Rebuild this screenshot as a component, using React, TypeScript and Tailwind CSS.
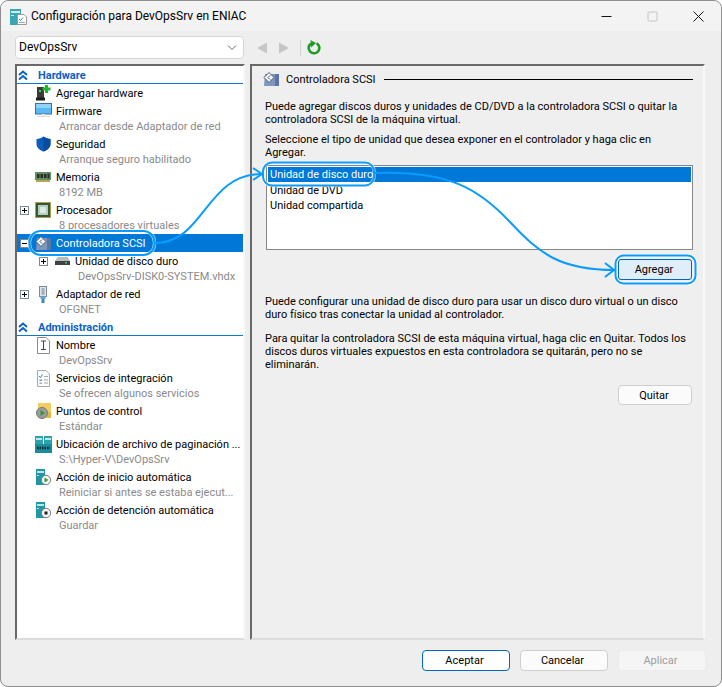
import type { ReactNode } from 'react'

const Chevrons = () => (
  <svg width="10" height="10" viewBox="0 0 10 10" fill="none" stroke="#0a62c9" strokeWidth="2">
    <path d="M1 5 L5 1.5 L9 5" />
    <path d="M1 9.5 L5 6 L9 9.5" />
  </svg>
)

const Toggle = ({ open }: { open?: boolean }) => (
  <svg width="9" height="9" viewBox="0 0 9 9" className="bg-white">
    <rect x="0.5" y="0.5" width="8" height="8" fill="#fff" stroke="#7c8894" />
    <path d="M2 4.5 H7" stroke="#000" />
    {!open && <path d="M4.5 2 V7" stroke="#000" />}
  </svg>
)

const AddHardwareIcon = () => (
  <svg width="16" height="16" viewBox="0 0 16 16">
    <rect x="2" y="2" width="7" height="11" fill="#3a3a3a" />
    <rect x="1" y="12.5" width="9" height="3" fill="#1c1c1c" />
    <rect x="4" y="5" width="2" height="2" fill="#3ddc4a" />
    <path d="M10 0 H13 V2.5 H15.5 V5.5 H13 V8 H10 V5.5 H7.5 V2.5 H10 Z" fill="#22b52e" />
  </svg>
)

const MonitorIcon = () => (
  <svg width="17" height="16" viewBox="0 0 17 16">
    <rect x="0.5" y="0.5" width="16" height="10.5" fill="#5cb8f2" stroke="#3b6ea5" />
    <rect x="1" y="1" width="15" height="4" fill="#8ed2f8" />
    <rect x="2" y="13" width="13" height="1" fill="#dcdcdc" />
    <rect x="7" y="11" width="3" height="2" fill="#e4e4e4" />
  </svg>
)

const ShieldIcon = () => (
  <svg width="15" height="16" viewBox="0 0 15 16">
    <path d="M7.5 0.5 C9.5 2 12 2.8 14.5 3 V8 C14.5 11.5 11.5 14 7.5 15.5 C3.5 14 0.5 11.5 0.5 8 V3 C3 2.8 5.5 2 7.5 0.5 Z" fill="#0a5db8" />
    <path d="M7.5 0.5 C9.5 2 12 2.8 14.5 3 V8 C14.5 11.5 11.5 14 7.5 15.5 Z" fill="#0b4c9e" />
  </svg>
)

const MemoryIcon = () => (
  <svg width="16" height="10" viewBox="0 0 16 10">
    <rect x="0" y="0" width="16" height="8" fill="#5f8f5c" />
    <rect x="2" y="2" width="2.5" height="4" fill="#2c2c2c" />
    <rect x="5.5" y="2" width="2.5" height="4" fill="#2c2c2c" />
    <rect x="9" y="2" width="2.5" height="4" fill="#2c2c2c" />
    <rect x="12.5" y="1.5" width="2" height="5" fill="#2c2c2c" />
    <path d="M1 8 H15 V10 H1 Z" fill="#b6a45c" />
  </svg>
)

const CpuIcon = () => (
  <svg width="16" height="16" viewBox="0 0 16 16">
    <rect x="0" y="0" width="16" height="16" fill="#b39a52" />
    <rect x="1" y="1" width="14" height="14" fill="#2f5a34" />
    <rect x="3" y="3" width="10" height="10" fill="#b6cbbd" />
    <rect x="5" y="5" width="6" height="6" fill="#dfe9e3" />
  </svg>
)

const ScsiIcon = () => (
  <svg width="16" height="15" viewBox="0 0 16 15">
    <path d="M2 2 H16 V14 H1 Z" fill="#7f97bd" />
    <path d="M12 2 H16 V14 H12 Z" fill="#5a76a6" />
    <path d="M6 0.5 L11 5.5 L6 10.5 L1 5.5 Z" fill="#f4f4f4" stroke="#4a5a78" />
    <path d="M7 3.5 L5 5.5 L7 7.5" fill="none" stroke="#4a5a78" />
  </svg>
)

const DiskIcon = () => (
  <svg width="15" height="8" viewBox="0 0 15 8">
    <path d="M2.5 0 H12.5 L15 4 H0 Z" fill="#b9bdc2" />
    <rect x="0" y="4" width="15" height="4" fill="#3f4145" />
    <rect x="10" y="5" width="2" height="1.5" fill="#33d04a" />
  </svg>
)

const NetIcon = () => (
  <svg width="10" height="17" viewBox="0 0 10 17">
    <rect x="1.5" y="0.5" width="7" height="10" fill="#dfe5ea" stroke="#7a8a98" />
    <rect x="3.5" y="2" width="3" height="7" fill="#9fb0bf" />
    <rect x="2.5" y="10.5" width="5" height="2.5" fill="#59a5dc" />
    <rect x="3.5" y="13" width="3" height="4" fill="#3f86bf" />
  </svg>
)

const NameIcon = () => (
  <svg width="13" height="17" viewBox="0 0 13 17">
    <path d="M0.5 0.5 H9 L12.5 4 V16.5 H0.5 Z" fill="#fff" stroke="#8b8b8b" />
    <path d="M4 4 H9 M6.5 4 V12.5 M4 12.5 H9" fill="none" stroke="#444" />
  </svg>
)

const ServicesIcon = () => (
  <svg width="13" height="17" viewBox="0 0 13 17">
    <path d="M0.5 0.5 H9 L12.5 4 V16.5 H0.5 Z" fill="#fbfbfb" stroke="#a8a8a8" />
    <path d="M2 6 L3.5 7.5 L5.5 4.5" fill="none" stroke="#3b7fc4" />
    <path d="M7 6.5 H11 M7 10 H11 M7 13 H11" stroke="#a8a8a8" />
    <rect x="2.5" y="9.5" width="2.5" height="1.5" fill="#5ba0dc" />
    <rect x="2.5" y="12.5" width="2.5" height="1.5" fill="#b0b0b0" />
  </svg>
)

const CheckpointIcon = () => (
  <svg width="15" height="16" viewBox="0 0 15 16">
    <rect x="2" y="0" width="13" height="15" fill="#f0cd60" />
    <rect x="11" y="9" width="4" height="6" fill="#e6b53e" />
    <circle cx="6" cy="10" r="5.5" fill="#9c9c9c" stroke="#777" />
    <path d="M4.5 7 L9 10 L4.5 13 Z" fill="#2d9b34" />
  </svg>
)

const PagingIcon = () => (
  <svg width="17" height="17" viewBox="0 0 17 17">
    <rect x="0" y="0" width="8" height="8" fill="#2aa3ad" />
    <rect x="9" y="0" width="8" height="8" fill="#2aa3ad" />
    <rect x="1" y="2" width="6" height="2" fill="#bfe6ea" />
    <rect x="10" y="2" width="6" height="2" fill="#bfe6ea" />
    <rect x="0" y="8" width="17" height="9" fill="#1d8c9a" />
    <path d="M2 12 H15" stroke="#0c2a30" strokeWidth="2.5" strokeDasharray="1.5 1" />
  </svg>
)

const ServerAction = ({ stop }: { stop?: boolean }) => (
  <svg width="15" height="17" viewBox="0 0 15 17">
    <rect x="0" y="0" width="9" height="16" fill="#2296a5" />
    <rect x="1" y="2" width="7" height="2" fill="#bfe6ea" />
    <rect x="1" y="6" width="2" height="1" fill="#bfe6ea" />
    <circle cx="10" cy="11" r="4.7" fill="#f4f4f4" stroke="#777" />
    {stop ? <rect x="8.5" y="9.5" width="3" height="3" fill="#222" /> : <path d="M8.5 8.5 L12.5 11 L8.5 13.5 Z" fill="#2d9b34" />}
  </svg>
)

const AppIcon = () => (
  <svg width="17" height="17" viewBox="0 0 17 17">
    <rect x="0" y="1" width="11" height="16" fill="#3aa6b2" />
    <rect x="1" y="3" width="9" height="2" fill="#cdeef1" />
    <rect x="1" y="7" width="3" height="1" fill="#cdeef1" />
    <path d="M7.5 6.5 H14 L16.5 9 V16.5 H7.5 Z" fill="#fff" stroke="#9a9a9a" />
    <path d="M9 11 L10.5 12.5 L13 9.5" fill="none" stroke="#3b7fc4" />
    <path d="M9 14.5 H15" stroke="#a8a8a8" />
  </svg>
)

type Item = {
  icon: ReactNode
  label: string
  sub?: string
  toggle?: 'open' | 'closed'
  depth?: number
  selected?: boolean
}

const hardware: Item[] = [
  { icon: <AddHardwareIcon />, label: 'Agregar hardware' },
  { icon: <MonitorIcon />, label: 'Firmware', sub: 'Arrancar desde Adaptador de red' },
  { icon: <ShieldIcon />, label: 'Seguridad', sub: 'Arranque seguro habilitado' },
  { icon: <MemoryIcon />, label: 'Memoria', sub: '8192 MB' },
  { icon: <CpuIcon />, label: 'Procesador', sub: '8 procesadores virtuales', toggle: 'closed' },
  { icon: <ScsiIcon />, label: 'Controladora SCSI', toggle: 'open', selected: true },
  { icon: <DiskIcon />, label: 'Unidad de disco duro', sub: 'DevOpsSrv-DISK0-SYSTEM.vhdx', toggle: 'closed', depth: 1 },
  { icon: <NetIcon />, label: 'Adaptador de red', sub: 'OFGNET', toggle: 'closed' },
]

const admin: Item[] = [
  { icon: <NameIcon />, label: 'Nombre', sub: 'DevOpsSrv' },
  { icon: <ServicesIcon />, label: 'Servicios de integración', sub: 'Se ofrecen algunos servicios' },
  { icon: <CheckpointIcon />, label: 'Puntos de control', sub: 'Estándar' },
  { icon: <PagingIcon />, label: 'Ubicación de archivo de paginación ...', sub: 'S:\\Hyper-V\\DevOpsSrv' },
  { icon: <ServerAction />, label: 'Acción de inicio automática', sub: 'Reiniciar si antes se estaba ejecut...' },
  { icon: <ServerAction stop />, label: 'Acción de detención automática', sub: 'Guardar' },
]

function SectionHeader({ title }: { title: string }) {
  return (
    <div className="flex h-[18px] items-center border-b border-[#0a78d7] pl-[1px]">
      <span className="mr-[10px] flex w-[10px] justify-center">
        <Chevrons />
      </span>
      <span className="pt-[2px] font-bold text-[#0a62c9]">{title}</span>
    </div>
  )
}

function TreeItem({ item }: { item: Item }) {
  const indent = item.depth ? 'pl-[22px]' : 'pl-[3px]'
  return (
    <div>
      <div className={`flex h-[18px] items-center whitespace-nowrap ${indent} ${item.selected ? 'bg-[#0078d7] text-white' : ''}`}>
        <span className="mr-[4px] flex w-[9px] shrink-0 justify-center">
          {item.toggle && <Toggle open={item.toggle === 'open'} />}
        </span>
        <span className="flex w-[20px] shrink-0 items-center justify-center">{item.icon}</span>
        <span className="pl-[3px]">{item.label}</span>
      </div>
      {item.sub && (
        <div className={`flex h-[15px] items-center whitespace-nowrap pb-[2px] text-[#8a8a8a] ${item.depth ? 'pl-[61px]' : 'pl-[42px]'}`}>
          {item.sub}
        </div>
      )}
    </div>
  )
}

function DialogButton({ children, kind }: { children: ReactNode; kind: 'primary' | 'normal' | 'disabled' }) {
  const styles = {
    primary: 'border-[#0067c0] bg-white text-black',
    normal: 'border-[#cfcfcf] bg-[#fbfbfb] text-black',
    disabled: 'border-[#ececec] bg-[#f5f5f5] text-[#9d9d9d]',
  }
  return (
    <button className={`flex h-[21px] w-[88px] items-center justify-center rounded-[4px] border pr-[3px] ${styles[kind]}`}>
      {children}
    </button>
  )
}

const sunken = 'border-2 border-t-[#696969] border-l-[#696969] border-r-[#f8f8f8] border-b-[#dcdcdc]'

export default function App() {
  return (
    <div className="relative h-[687px] w-[722px] overflow-hidden bg-white font-['Roboto',sans-serif] text-[11px] leading-[13px] text-black">
      <div className="flex h-full flex-col rounded-[8px] border border-[#8f8f8f] bg-[#eeeeee]">
        {/* title bar */}
        <div className="flex h-[30px] shrink-0 items-center rounded-t-[8px] bg-[#f3f3f3] pl-[9px]">
          <AppIcon />
          <span className="ml-[4px] text-[12px]">Configuración para DevOpsSrv en ENIAC</span>
          <div className="ml-auto flex items-center gap-[35px] pr-[17px]">
            <svg width="11" height="11" viewBox="0 0 11 11"><path d="M0.5 5.5 H10.5" stroke="#111" /></svg>
            <svg width="11" height="11" viewBox="0 0 11 11"><rect x="1" y="1" width="9" height="9" rx="1" fill="none" stroke="#c4c4c4" /></svg>
            <svg width="11" height="11" viewBox="0 0 11 11"><path d="M0.5 0.5 L10.5 10.5 M10.5 0.5 L0.5 10.5" stroke="#111" /></svg>
          </div>
        </div>

        {/* selector and toolbar */}
        <div className="flex h-[33px] shrink-0 items-center pl-[14px]">
          <div className="flex h-[23px] w-[229px] items-center justify-between rounded-[4px] border border-[#d6d6d6] bg-white pl-[3px] pr-[6px] text-[12px]">
            DevOpsSrv
            <svg width="10" height="6" viewBox="0 0 10 6" fill="none" stroke="#666"><path d="M1 0.5 L5 4.5 L9 0.5" /></svg>
          </div>
          <svg width="70" height="16" viewBox="0 0 70 16" className="ml-[12px]">
            <path d="M11 2.5 V13.5 L1 8 Z" fill="#c6c6c6" />
            <path d="M23 2.5 V13.5 L33 8 Z" fill="#c6c6c6" />
            <path d="M44.5 0 V16" stroke="#d4d4d4" />
          </svg>
          <svg width="14" height="15" viewBox="0 0 14 15" fill="none" className="-ml-[19px]">
            <path d="M4 3.6 A5.3 5.3 0 1 0 9.5 3.3" stroke="#1f9a27" strokeWidth="2.6" />
            <path d="M3.5 0 L9 3 L4.2 7.5 Z" fill="#1f9a27" />
          </svg>
        </div>

        {/* panels */}
        <div className="flex min-h-0 flex-1 gap-[5px] pl-[14px]">
          <div className={`w-[230px] overflow-hidden bg-white ${sunken}`}>
            <SectionHeader title="Hardware" />
            {hardware.map((item) => <TreeItem key={item.label} item={item} />)}
            <SectionHeader title="Administración" />
            {admin.map((item) => <TreeItem key={item.label} item={item} />)}
          </div>

          <div className={`w-[455px] bg-[#efefef] pl-[13px] pr-[10px] pt-[5px] ${sunken}`}>
            <div className="flex h-[16px] items-center">
              <span className="-ml-[2px] flex">
                <ScsiIcon />
              </span>
              <span className="ml-[7px] whitespace-nowrap">Controladora SCSI</span>
              <span className="ml-[8px] h-px flex-1 bg-black" />
            </div>
            <p className="mt-[13px] whitespace-nowrap">
              Puede agregar discos duros y unidades de CD/DVD a la controladora SCSI o quitar la
              <br />
              controladora SCSI de la máquina virtual.
            </p>
            <p className="mt-[7px] whitespace-nowrap">
              Seleccione el tipo de unidad que desea exponer en el controlador y haga clic en
              <br />
              Agregar.
            </p>
            <div className="ml-[1px] mt-[6px] h-[85px] w-[427px] border border-[#82878c] bg-white p-px">
              <div className="flex h-[15px] items-center bg-[#0078d7] pl-[2px] text-white">Unidad de disco duro</div>
              <div className="flex h-[16px] items-center pl-[2px]">Unidad de DVD</div>
              <div className="flex h-[15px] items-center pl-[2px]">Unidad compartida</div>
            </div>
            <div className="mt-[9px] flex justify-end pr-[1px]">
              <button className="flex h-[21px] w-[74px] items-center justify-center rounded-[3px] border border-[#0067c0] bg-[#e0eef9] pr-[2px]">
                Agregar
              </button>
            </div>
            <p className="mt-[15px] whitespace-nowrap">
              Puede configurar una unidad de disco duro para usar un disco duro virtual o un disco
              <br />
              duro físico tras conectar la unidad al controlador.
            </p>
            <p className="mt-[11px] whitespace-nowrap">
              Para quitar la controladora SCSI de esta máquina virtual, haga clic en Quitar. Todos los
              <br />
              discos duros virtuales expuestos en esta controladora se quitarán, pero no se
              <br />
              eliminarán.
            </p>
            <div className="mt-[14px] flex justify-end pr-[1px]">
              <button className="flex h-[20px] w-[74px] items-center justify-center rounded-[4px] border border-[#cfcfcf] bg-[#fbfbfb] pr-[2px]">
                Quitar
              </button>
            </div>
          </div>
        </div>

        {/* dialog buttons */}
        <div className="flex h-[46px] shrink-0 justify-end gap-[10px] pr-[15px] pt-[10px]">
          <DialogButton kind="primary">Aceptar</DialogButton>
          <DialogButton kind="normal">Cancelar</DialogButton>
          <DialogButton kind="disabled">Aplicar</DialogButton>
        </div>
      </div>

      {/* callouts drawn over the dialog */}
      <svg width="722" height="687" viewBox="0 0 722 687" fill="none" className="pointer-events-none absolute left-0 top-0">
        <g stroke="#fff" strokeWidth="3.5" opacity="0.6">
          <rect x="29.5" y="231" width="125" height="24" rx="11" />
          <rect x="263" y="162.5" width="111" height="23" rx="9" />
          <rect x="615.5" y="255.5" width="80" height="28" rx="8" />
        </g>
        <g stroke="#0a9bff" strokeWidth="2">
          <rect x="29.5" y="231" width="125" height="24" rx="11" />
          <rect x="263" y="162.5" width="111" height="23" rx="9" />
          <rect x="615.5" y="255.5" width="80" height="28" rx="8" />
          <path d="M155 243 C205 243 205 174 262 174" />
          <path d="M253 168 L262 174 L253 180" />
          <path d="M374 173 C450 170 480 190 510 222 S560 270 615 270" />
          <path d="M605 263 L614 270 L605 277" />
        </g>
      </svg>
    </div>
  )
}
